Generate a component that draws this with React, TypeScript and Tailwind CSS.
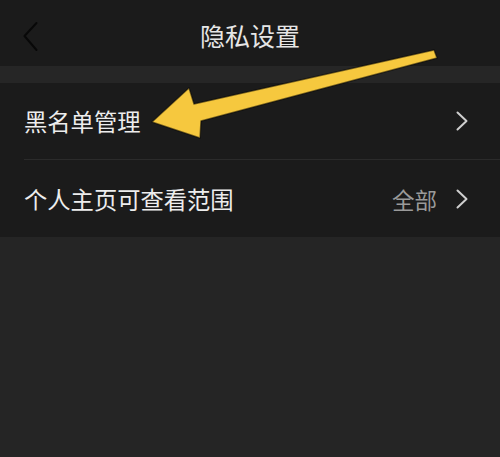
const rows = [
  { label: "黑名单管理", value: "" },
  { label: "个人主页可查看范围", value: "全部" }
];

function Chevron({ className }: { className?: string }) {
  return (
    <svg className={className} width="12" height="20" viewBox="0 0 12 20" fill="none" aria-hidden="true">
      <polyline points="1.5,1.5 10.5,10 1.5,18.5" stroke="currentColor" strokeWidth="2" strokeLinecap="round" strokeLinejoin="round" />
    </svg>
  );
}

export default function App() {
  return (
    <main
      className="relative h-[457px] w-[500px] overflow-hidden bg-[#252525]"
      style={{ fontFamily: '"Noto Sans CJK SC", "Noto Sans", sans-serif' }}
    >
      <header className="relative flex h-[66px] items-center justify-center bg-[#1b1b1b]">
        <svg className="absolute left-[22px] top-[21px]" width="17" height="32" viewBox="0 0 17 32" fill="none" aria-hidden="true">
          <polyline points="14.5,2 2.5,15 14.5,29" stroke="#080808" strokeWidth="2" strokeLinecap="round" strokeLinejoin="round" />
        </svg>
        <h1 className="mt-[4px] text-[25px] leading-none text-[#e6e6e6]">隐私设置</h1>
      </header>

      <div className="h-[17px] bg-[#262626]" />

      <section className="bg-[#1b1b1b]">
        {rows.map((row, i) => (
          <div className="flex h-[77px] items-center pl-[24px]" key={row.label}>
            <div
              className={
                "flex h-full flex-1 items-center pr-[32px] " +
                (i === 0 ? "border-b border-[#2b2b2b]" : "")
              }
            >
              <span className="mt-[2px] flex-1 text-[23.3px] leading-none text-[#ededed]">{row.label}</span>
              {row.value && (
                <span className="mr-[19px] mt-[2px] text-[22.5px] leading-none text-[#9a9a9a]">{row.value}</span>
              )}
              <Chevron className="text-[#cfcfcf]" />
            </div>
          </div>
        ))}
      </section>

      {/* annotation arrow */}
      <svg className="pointer-events-none absolute left-0 top-0" width="500" height="457" aria-hidden="true">
        <polygon
          points="152,122 189,88 194,104 434,50 437,58 201,121 200,138"
          fill="#f6c83e"
          stroke="#000000"
          strokeOpacity="0.5"
          strokeWidth="1.5"
          strokeLinejoin="round"
        />
      </svg>
    </main>
  );
}
